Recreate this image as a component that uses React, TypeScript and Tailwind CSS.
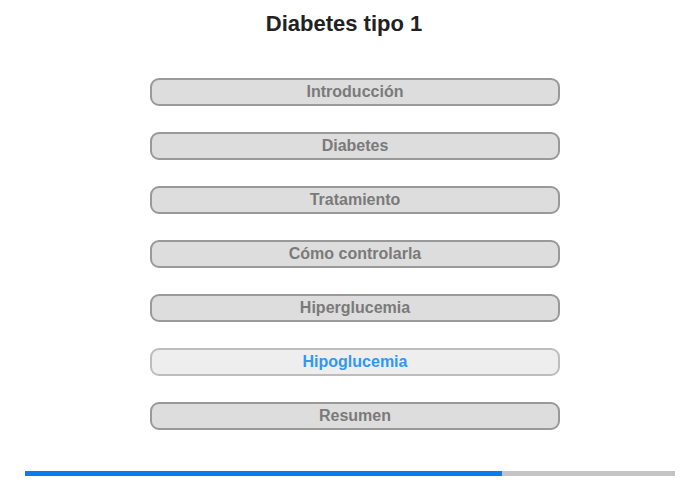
const sections = [
  'Introducción',
  'Diabetes',
  'Tratamiento',
  'Cómo controlarla',
  'Hiperglucemia',
  'Hipoglucemia',
  'Resumen',
];

const current = 'Hipoglucemia';

export default function App() {
  return (
    <div className="h-[480px] w-[700px] bg-white font-['Liberation_Sans',Arial,sans-serif]">
      <h1 className="pt-[11px] pr-[12px] text-center text-[22px] leading-[25px] font-bold text-[#222]">
        Diabetes tipo 1
      </h1>

      <div className="mt-[42px] ml-[150px] flex w-[410px] flex-col gap-[26px]">
        {sections.map((s) =>
          s === current ? (
            <button
              key={s}
              type="button"
              className="h-[28px] rounded-[9px] border-2 border-[#bdbdbd] bg-[#eeeeee] text-[16px] leading-[24px] font-bold text-[#3296f5]"
            >
              {s}
            </button>
          ) : (
            <button
              key={s}
              type="button"
              className="h-[28px] rounded-[9px] border-2 border-[#999999] bg-[#dddddd] text-[16px] leading-[24px] font-bold text-[#7a7a7a]"
            >
              {s}
            </button>
          ),
        )}
      </div>

      <div className="mt-[41px] ml-[25px] flex h-[5px] w-[650px] bg-[#c4c4c4]">
        <div className="h-full bg-[#0a7cf0]" style={{ width: '477px' }} />
      </div>
    </div>
  );
}
